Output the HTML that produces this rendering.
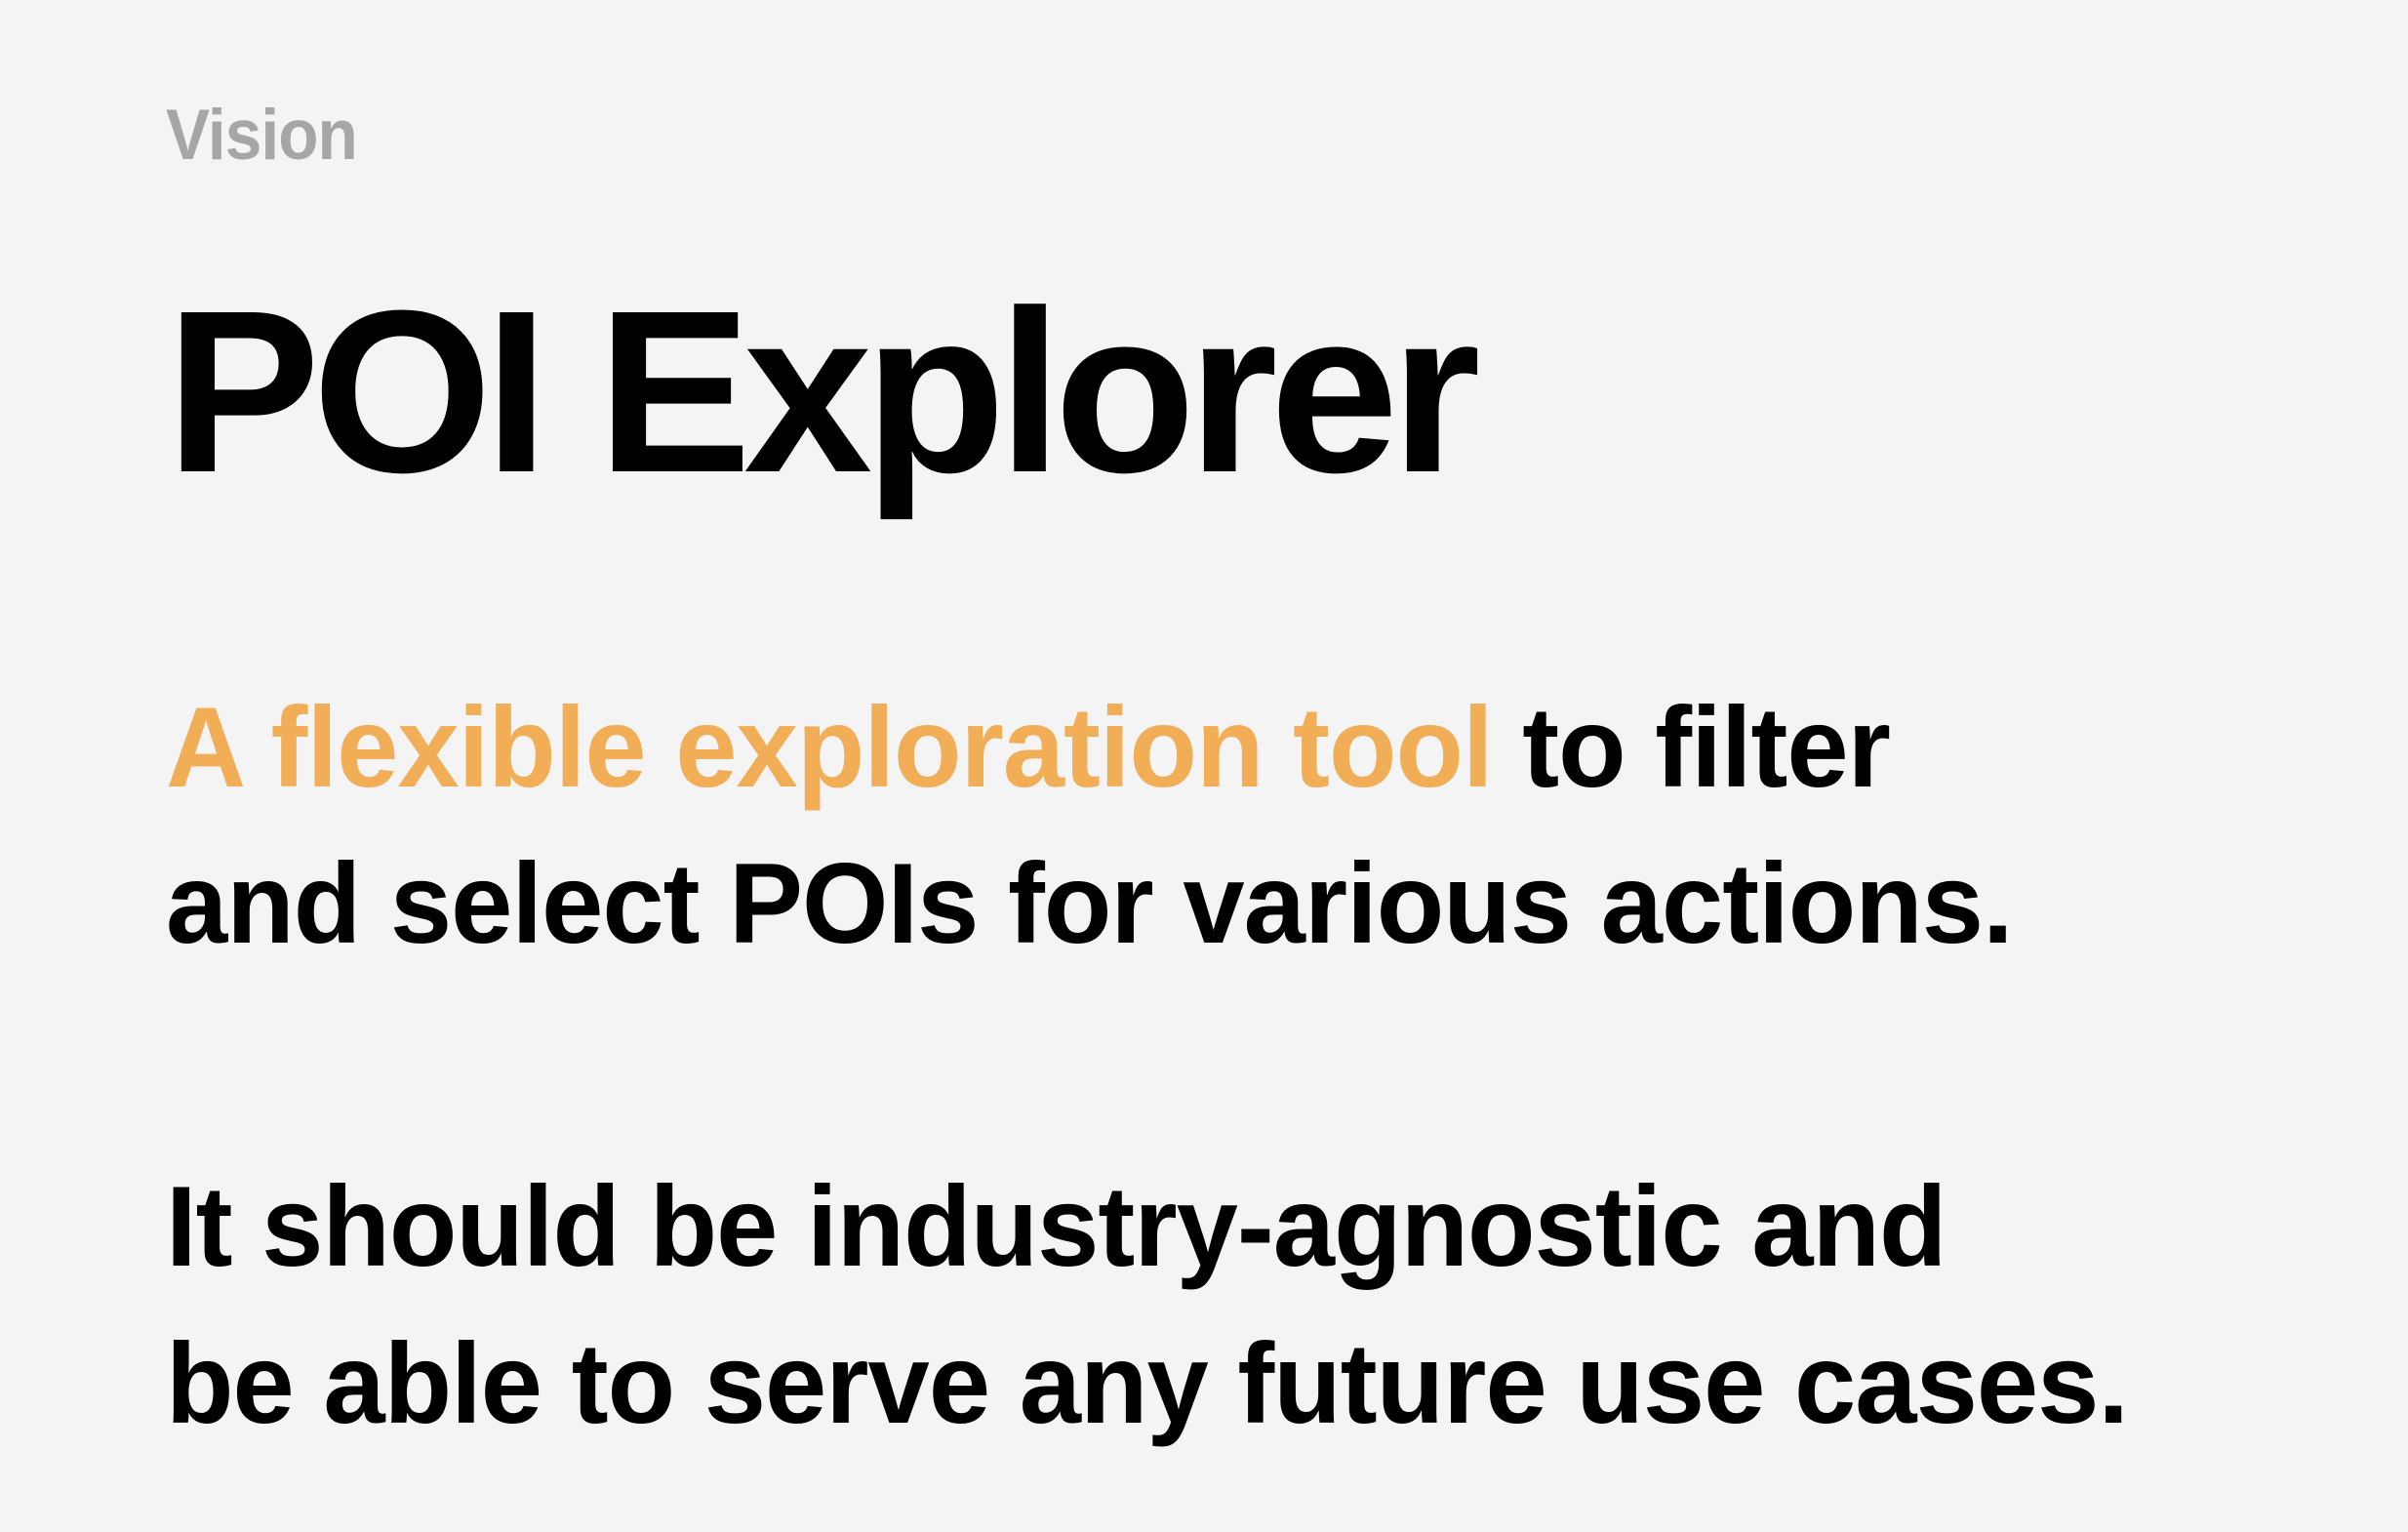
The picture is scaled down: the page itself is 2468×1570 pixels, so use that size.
<!DOCTYPE html>
<html><head><meta charset="utf-8"><style>
html,body{margin:0;padding:0;}
body{width:2468px;height:1570px;background:#f4f4f4;position:relative;overflow:hidden;font-family:"Liberation Sans",sans-serif;font-weight:bold;color:#000;}
.a{position:absolute;left:170px;white-space:nowrap;line-height:1;transform-origin:0 0;}
.v{font-size:73px;top:102px;color:#a6a6a6;letter-spacing:-1px;transform:scaleX(0.925);}
.t{font-size:237px;top:283px;letter-spacing:-8px;}
.b{font-size:117px;transform:scaleX(0.972);letter-spacing:-1px;}
.o{color:#f2ad57;}
</style></head><body>
<div class="a v">Vision</div>
<div class="a t">POI Explorer</div>
<div class="a b" style="top:707px"><span class="o">A flexible exploration tool</span> to filter</div>
<div class="a b" style="top:867px">and select POIs for various actions.</div>
<div class="a b" style="top:1198px">It should be industry-agnostic and</div>
<div class="a b" style="top:1359px">be able to serve any future use cases.</div>
</body></html>
